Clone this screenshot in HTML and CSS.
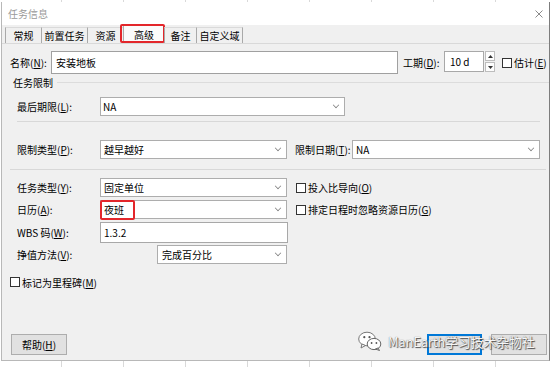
FILE: index.html
```html
<!DOCTYPE html>
<html lang="zh-CN">
<head>
  <meta charset="UTF-8" />
  <title>任务信息</title>
  <link rel="stylesheet" href="styles.css">
</head>
<body>
  <div class="dialog">
    <div class="titlebar">
      <span class="title">任务信息</span>
      <svg class="close" width="8" height="8" viewBox="0 0 8 8"><path d="M0.5 0.5L7.5 7.5M7.5 0.5L0.5 7.5" stroke="#8a8a8a" stroke-width="1" fill="none"/></svg>
    </div>

    <div class="tabs">
      <div class="tab">常规</div>
      <div class="tab">前置任务</div>
      <div class="tab">资源</div>
      <div class="tab active">高级<span class="mark"></span></div>
      <div class="tab">备注</div>
      <div class="tab">自定义域</div>
    </div>

    <div class="panel">
      <div class="row row-name">
        <label class="lbl-name">名称(<u>N</u>):</label>
        <div class="field name-field">安装地板</div>
        <label class="lbl-dur">工期(<u>D</u>):</label>
        <div class="field dur-field">10 d</div>
        <div class="spin">
          <span class="spin-btn"><svg width="5" height="3" viewBox="0 0 5 3"><path d="M0 3L2.5 0L5 3Z" fill="#333"/></svg></span>
          <span class="spin-btn"><svg width="5" height="3" viewBox="0 0 5 3"><path d="M0 0L2.5 3L5 0Z" fill="#333"/></svg></span>
        </div>
        <label class="check check-est"><span class="box"></span>估计(<u>E</u>)</label>
      </div>

      <div class="group-head"><span>任务限制</span></div>

      <div class="row row-left r-deadline">
        <label class="lbl">最后期限(<u>L</u>):</label>
        <div class="field combo w-deadline"><span class="val">NA</span><span class="chev"></span></div>
      </div>

      <div class="sep sep-a"></div>

      <div class="row row-left r-constraint">
        <label class="lbl">限制类型(<u>P</u>):</label>
        <div class="field combo w-mid"><span class="val">越早越好</span><span class="chev"></span></div>
        <label class="lbl-date">限制日期(<u>T</u>):</label>
        <div class="field combo w-date"><span class="val">NA</span><span class="chev"></span></div>
      </div>

      <div class="sep sep-b"></div>

      <div class="row row-left r-type">
        <label class="lbl">任务类型(<u>Y</u>):</label>
        <div class="field combo w-mid"><span class="val">固定单位</span><span class="chev"></span></div>
        <label class="check check-right"><span class="box"></span>投入比导向(<u>O</u>)</label>
      </div>

      <div class="row row-left r-cal">
        <label class="lbl">日历(<u>A</u>):</label>
        <div class="field combo w-mid"><span class="val">夜班</span><span class="chev"></span><span class="mark-cal"></span></div>
        <label class="check check-right"><span class="box"></span>排定日程时忽略资源日历(<u>G</u>)</label>
      </div>

      <div class="row row-left r-wbs">
        <label class="lbl">WBS 码(<u>W</u>):</label>
        <div class="field w-wbs">1.3.2</div>
      </div>

      <div class="row row-left r-ev">
        <label class="lbl lbl-ev">挣值方法(<u>V</u>):</label>
        <div class="field combo w-ev"><span class="val">完成百分比</span><span class="chev"></span></div>
      </div>

      <div class="row r-mile">
        <label class="check"><span class="box"></span>标记为里程碑(<u>M</u>)</label>
      </div>

      <div class="footer">
        <button class="btn">帮助(<u>H</u>)</button>
        <div class="footer-right">
          <button class="btn btn-ok"></button>
          <button class="btn"></button>
        </div>
      </div>
    </div>
  </div>

  <div class="watermark">
    <svg class="wx" width="24" height="20" viewBox="0 0 24 20">
      <ellipse cx="9" cy="8" rx="8.3" ry="6.8" fill="#fff" stroke="#777" stroke-width="1"/>
      <path d="M4 13L3 17L7.5 14.5Z" fill="#fff" stroke="#777" stroke-width="1"/>
      <ellipse cx="16" cy="13" rx="6.8" ry="5.6" fill="#fff" stroke="#666" stroke-width="1"/>
      <path d="M20 17L21.5 19.5L17.5 18Z" fill="#fff" stroke="#666" stroke-width="1"/>
      <circle cx="6.3" cy="6.2" r="1.1" fill="#555"/>
      <circle cx="11.5" cy="6.2" r="1.1" fill="#555"/>
      <circle cx="13.6" cy="12" r="0.9" fill="#555"/>
      <circle cx="18.4" cy="12" r="0.9" fill="#555"/>
    </svg>
    <span class="wm-text">ManEarth学习技术杂物社</span>
  </div>
</body>
</html>
```

FILE: styles.css
```css
body {
  margin: 0;
  width: 554px;
  height: 367px;
  overflow: hidden;
  position: relative;
  background: #fff repeating-linear-gradient(90deg, transparent 0 61px, #d9d9d9 61px 62px);
  font-family: "Noto Sans CJK SC", "Noto Sans", sans-serif;
  font-size: 10px;
  color: #000;
}

u {
  text-decoration: underline;
}

.dialog {
  margin: 2px 0 0 1px;
  width: 549px;
  height: 359px;
  box-sizing: border-box;
  background: #f0f0f0;
  border: 1px solid #b8b8b8;
  border-top: none;
  border-right-color: #7d7d7d;
  display: flex;
  flex-direction: column;
}

.titlebar {
  height: 23px;
  background: #fff;
  display: flex;
  align-items: center;
  justify-content: space-between;
  padding: 0 6px 0 6px;
  color: #9a9a9a;
  font-size: 10px;
}

.tabs {
  height: 19px;
  box-sizing: border-box;
  display: flex;
  align-items: flex-end;
  padding-left: 3px;
  border-bottom: 1px solid #d9d9d9;
}

.tab {
  height: 16px;
  box-sizing: border-box;
  display: flex;
  align-items: center;
  justify-content: center;
  border-left: 1px solid #a9a9a9;
  border-top: 1px solid #dadada;
  position: relative;
  line-height: 1;
}

.tab:nth-child(1) { width: 36px; }
.tab:nth-child(2) { width: 46px; }
.tab:nth-child(3) { width: 36px; }
.tab:nth-child(4) { width: 41px; }
.tab:nth-child(5) { width: 32px; }
.tab:nth-child(6) { width: 47px; border-right: 1px solid #a9a9a9; }

.tab.active {
  background: #fbfbfb;
  height: 18px;
  border-color: #adadad;
}

.mark {
  position: absolute;
  left: -4px;
  right: -1px;
  top: -2px;
  bottom: 0;
  border: 2px solid #e3262b;
  border-radius: 2px;
}

.panel {
  flex: 1;
  display: flex;
  flex-direction: column;
}

.row {
  display: flex;
  align-items: center;
  flex-shrink: 0;
}

.field {
  height: 19px;
  box-sizing: border-box;
  border: 1px solid #a8a8a8;
  background: #fff;
  display: flex;
  align-items: center;
  padding-left: 3px;
  white-space: nowrap;
}

.combo {
  position: relative;
  justify-content: space-between;
  padding-right: 5px;
  border-color: #adadad;
}

.chev {
  width: 5px;
  height: 5px;
  border-right: 1px solid #777;
  border-bottom: 1px solid #777;
  transform: rotate(45deg) scale(0.75);
  margin-top: -3px;
}

/* name row */
.row-name {
  margin-top: 7px;
  height: 23px;
  padding-left: 8px;
}

.lbl-name {
  width: 41px;
}

.name-field {
  width: 347px;
  height: 23px;
  padding-left: 4px;
  border-color: #a0a0a0;
}

.lbl-dur {
  width: 41px;
  margin-left: 5px;
}

.dur-field {
  width: 40px;
  height: 21px;
  padding-left: 5px;
  align-self: flex-start;
}

.spin {
  width: 10px;
  height: 21px;
  margin-left: 1px;
  align-self: flex-start;
  display: flex;
  flex-direction: column;
  gap: 1px;
}

.spin-btn {
  flex: 1;
  background: #fdfdfd;
  border: 1px solid #bdbdbd;
  display: flex;
  align-items: center;
  justify-content: center;
}

.check {
  display: flex;
  align-items: center;
  white-space: nowrap;
}

.box {
  width: 10px;
  height: 10px;
  box-sizing: border-box;
  border: 1px solid #333;
  background: #fff;
  margin-right: 2px;
}

.check-est {
  margin-left: 7px;
}

/* group */
.group-head {
  margin-top: 1px;
  height: 14px;
  padding-left: 11px;
  display: flex;
  align-items: center;
  flex-shrink: 0;
}

.group-head::after {
  content: "";
  flex: 1;
  height: 1px;
  background: #dcdcdc;
  margin: 1px 0 0 4px;
}

.row-left {
  padding-left: 15px;
  height: 19px;
}

.lbl {
  width: 83px;
  flex-shrink: 0;
}

.lbl-ev {
  width: 140px;
}

.r-deadline {
  margin-top: 8px;
}

.w-deadline {
  width: 245px;
  padding-left: 2px;
}

.sep {
  height: 1px;
  background: #d8d8d8;
  flex-shrink: 0;
}

.sep-a {
  margin: 5px 0 0 15px;
  width: 523px;
}

.sep-b {
  margin: 0 0 0 8px;
  width: 536px;
}

.r-constraint {
  margin-top: 18px;
  margin-bottom: 10px;
}

.w-mid {
  width: 187px;
}

.lbl-date {
  width: 57px;
  margin-left: 8px;
}

.w-date {
  width: 188px;
}

.r-type {
  margin-top: 8px;
}

.check-right {
  margin-left: 9px;
}

.r-cal {
  margin-top: 3px;
}

.mark-cal {
  position: absolute;
  left: -1px;
  top: -1px;
  width: 35px;
  height: 20px;
  box-sizing: border-box;
  border: 2px solid #e3262b;
  border-radius: 2px;
}

.r-wbs {
  margin-top: 3px;
  height: 21px;
}

.w-wbs {
  width: 188px;
  height: 21px;
}

.r-ev {
  margin-top: 2px;
}

.w-ev {
  width: 130px;
  padding-left: 4px;
}

.r-mile {
  margin-top: 12px;
  height: 12px;
  padding-left: 8px;
}

/* buttons */
.footer {
  margin-top: auto;
  padding: 0 2px 5px 9px;
  display: flex;
  justify-content: space-between;
}

.footer-right {
  display: flex;
  gap: 9px;
}

.btn {
  width: 56px;
  height: 21px;
  box-sizing: border-box;
  background: #e1e1e1;
  border: 1px solid #adadad;
  font-family: inherit;
  font-size: 10px;
  color: #000;
  padding: 0;
}

.btn-ok {
  border: 1px solid #0078d7;
  box-shadow: inset 0 0 0 1px #0078d7;
  width: 55px;
}

/* watermark overlay */
.watermark {
  position: absolute;
  left: 358px;
  top: 331px;
  display: flex;
  align-items: center;
  gap: 6px;
}

.wm-text {
  font-size: 13px;
  letter-spacing: -0.2px;
  color: #f6f6f6;
  text-shadow: 1px 1px 1px #4a4a4a, 0 0 1px #666;
  margin-top: 1px;
}
```
